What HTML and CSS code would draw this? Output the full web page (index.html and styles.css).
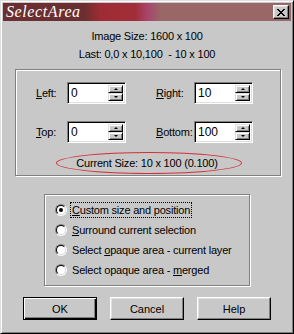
FILE: index.html
```html
<!DOCTYPE html>
<html lang="en">
<head>
  <meta charset="UTF-8">
  <title>Select Area</title>
  <link rel="stylesheet" href="styles.css">
</head>
<body>
  <div class="window">
    <div class="titlebar">
      <span class="title">SelectArea</span>
      <button class="close">
        <svg width="8" height="7" viewBox="0 0 8 7" shape-rendering="crispEdges">
          <path fill="#000" d="M0 0h2v1h-2z M6 0h2v1h-2z M1 1h2v1h-2z M5 1h2v1h-2z M2 2h4v1h-4z M3 3h2v1h-2z M2 4h4v1h-4z M1 5h2v1h-2z M5 5h2v1h-2z M0 6h2v1h-2z M6 6h2v1h-2z"/>
        </svg>
      </button>
    </div>

    <div class="info">
      <div>Image Size: 1600 x 100</div>
      <div>Last: 0,0 x 10,100&nbsp; - 10 x 100</div>
    </div>

    <div class="group coords">
      <div class="grid">
        <label class="lbl"><u>L</u>eft:</label>
        <div class="spin"><input type="text" value="0"><div class="arrows"><span class="btn"><i class="up"></i></span><span class="btn"><i class="down"></i></span></div></div>
        <label class="lbl"><u>R</u>ight:</label>
        <div class="spin"><input type="text" value="10"><div class="arrows"><span class="btn"><i class="up"></i></span><span class="btn"><i class="down"></i></span></div></div>

        <label class="lbl"><u>T</u>op:</label>
        <div class="spin"><input type="text" value="0"><div class="arrows"><span class="btn"><i class="up"></i></span><span class="btn"><i class="down"></i></span></div></div>
        <label class="lbl"><u>B</u>ottom:</label>
        <div class="spin"><input type="text" value="100"><div class="arrows"><span class="btn"><i class="up"></i></span><span class="btn"><i class="down"></i></span></div></div>
      </div>
      <div class="current"><span class="ellipse">Current Size: 10 x 100 (0.100)</span></div>
    </div>

    <div class="group options">
      <div class="opt"><span class="radio checked"><span class="radio-in"></span></span><span class="focus"><u>C</u>ustom size and position</span></div>
      <div class="opt"><span class="radio"><span class="radio-in"></span></span><span><u>S</u>urround current selection</span></div>
      <div class="opt"><span class="radio"><span class="radio-in"></span></span><span>Select <u>o</u>paque area - current layer</span></div>
      <div class="opt"><span class="radio"><span class="radio-in"></span></span><span>Select opaque area - <u>m</u>erged</span></div>
    </div>

    <div class="buttons">
      <button class="push default">OK</button>
      <button class="push">Cancel</button>
      <button class="push">Help</button>
    </div>
  </div>
</body>
</html>
```

FILE: styles.css
```css
* {
  box-sizing: border-box;
}
body {
  margin: 0;
  background: #c8c8c8;
  font-family: "Liberation Sans", Arial, sans-serif;
  font-size: 11px;
  letter-spacing: -0.2px;
  color: #000;
}
.window {
  width: 294px;
  height: 334px;
  background: #c8c8c8;
  border: 1px solid;
  border-color: #dfdfdf #000 #000 #dfdfdf;
  box-shadow: inset 1px 1px #fff, inset -1px -1px #808080;
  padding: 2px;
}
.titlebar {
  height: 18px;
  display: flex;
  align-items: center;
  justify-content: space-between;
  padding: 0 2px 0 3px;
  background: linear-gradient(to right, #6b2f31 0, #6b2f31 28%, #9f2c35 34%, #a12d38 46%, #a8446a 50%, #9a6767 55%, #9a6767 100%);
}
.title {
  color: #fff;
  font-family: "Liberation Serif", serif;
  font-style: italic;
  font-size: 16px;
  letter-spacing: 0.6px;
  line-height: 18px;
}
.close {
  width: 16px;
  height: 14px;
  padding: 0;
  margin: 0;
  display: flex;
  align-items: center;
  justify-content: center;
  background: #c8c8c8;
  border: 1px solid;
  border-color: #fff #000 #000 #fff;
  box-shadow: inset -1px -1px #808080, inset 1px 1px #dfdfdf;
}
.info {
  margin-top: 6px;
  text-align: center;
  line-height: 18px;
}
.group {
  border: 1px solid #808080;
  box-shadow: inset 1px 1px #fff, 1px 1px #fff;
}
.coords {
  margin: 6px 10px 0 12px;
  padding: 12px 0 1px 20px;
}
.grid {
  display: grid;
  grid-template-columns: 31px 89px 38px 58px;
  grid-template-rows: 22px 22px;
  row-gap: 17px;
  align-items: center;
}
.lbl {
  line-height: 14px;
}
.spin {
  width: 59px;
  height: 22px;
  display: flex;
  background: #fff;
  border: 1px solid;
  border-color: #808080 #fff #fff #808080;
  box-shadow: inset 1px 1px #000, inset -1px -1px #dfdfdf;
  padding: 2px;
}
.spin input {
  flex: 1;
  min-width: 0;
  border: none;
  outline: none;
  padding: 0 0 0 1px;
  font: inherit;
  font-size: 12px;
  background: transparent;
}
.arrows {
  width: 15px;
  display: flex;
  flex-direction: column;
}
.arrows .btn {
  flex: 1;
  display: flex;
  align-items: center;
  justify-content: center;
  background: #c8c8c8;
  border: 1px solid;
  border-color: #dfdfdf #000 #000 #dfdfdf;
  box-shadow: inset 1px 1px #fff, inset -1px -1px #808080;
}
.up {
  width: 0;
  height: 0;
  border-left: 2px solid transparent;
  border-right: 2px solid transparent;
  border-bottom: 2px solid #000;
}
.down {
  width: 0;
  height: 0;
  border-left: 2px solid transparent;
  border-right: 2px solid transparent;
  border-top: 2px solid #000;
}
.current {
  margin: 9px 0 0 -20px;
  padding-left: 2px;
  text-align: center;
}
.ellipse {
  display: inline-block;
  height: 22px;
  line-height: 20px;
  padding: 0 23px 0 19px;
  border: 1.5px solid #d3303a;
  border-radius: 50%;
}
.options {
  width: 206px;
  margin: 18px auto 0;
  padding: 5px 0 5px 10px;
}
.opt {
  height: 20px;
  display: flex;
  align-items: center;
  gap: 4px;
}
.radio {
  width: 12px;
  height: 12px;
  border-radius: 50%;
  border: 1px solid;
  border-color: #808080 #fff #fff #808080;
  flex-shrink: 0;
}
.radio-in {
  display: flex;
  align-items: center;
  justify-content: center;
  width: 10px;
  height: 10px;
  border-radius: 50%;
  border: 1px solid;
  border-color: #000 #dfdfdf #dfdfdf #000;
  background: #fff;
}
.radio.checked .radio-in::after {
  content: "";
  width: 4px;
  height: 4px;
  border-radius: 50%;
  background: #000;
}
.opt span:last-child {
  padding: 0 1px;
  line-height: 14px;
}
.focus {
  outline: 1px dotted #000;
}
.buttons {
  margin-top: 11px;
  display: flex;
  justify-content: center;
  gap: 13px;
}
.push {
  width: 74px;
  height: 23px;
  padding: 0;
  font: inherit;
  background: #c8c8c8;
  border: 1px solid;
  border-color: #fff #000 #000 #fff;
  box-shadow: inset -1px -1px #808080, inset 1px 1px #dfdfdf;
}
.push.default {
  border: 1px solid #000;
  box-shadow: inset 1px 1px #fff, inset -1px -1px #000, inset -2px -2px #808080;
}
```
